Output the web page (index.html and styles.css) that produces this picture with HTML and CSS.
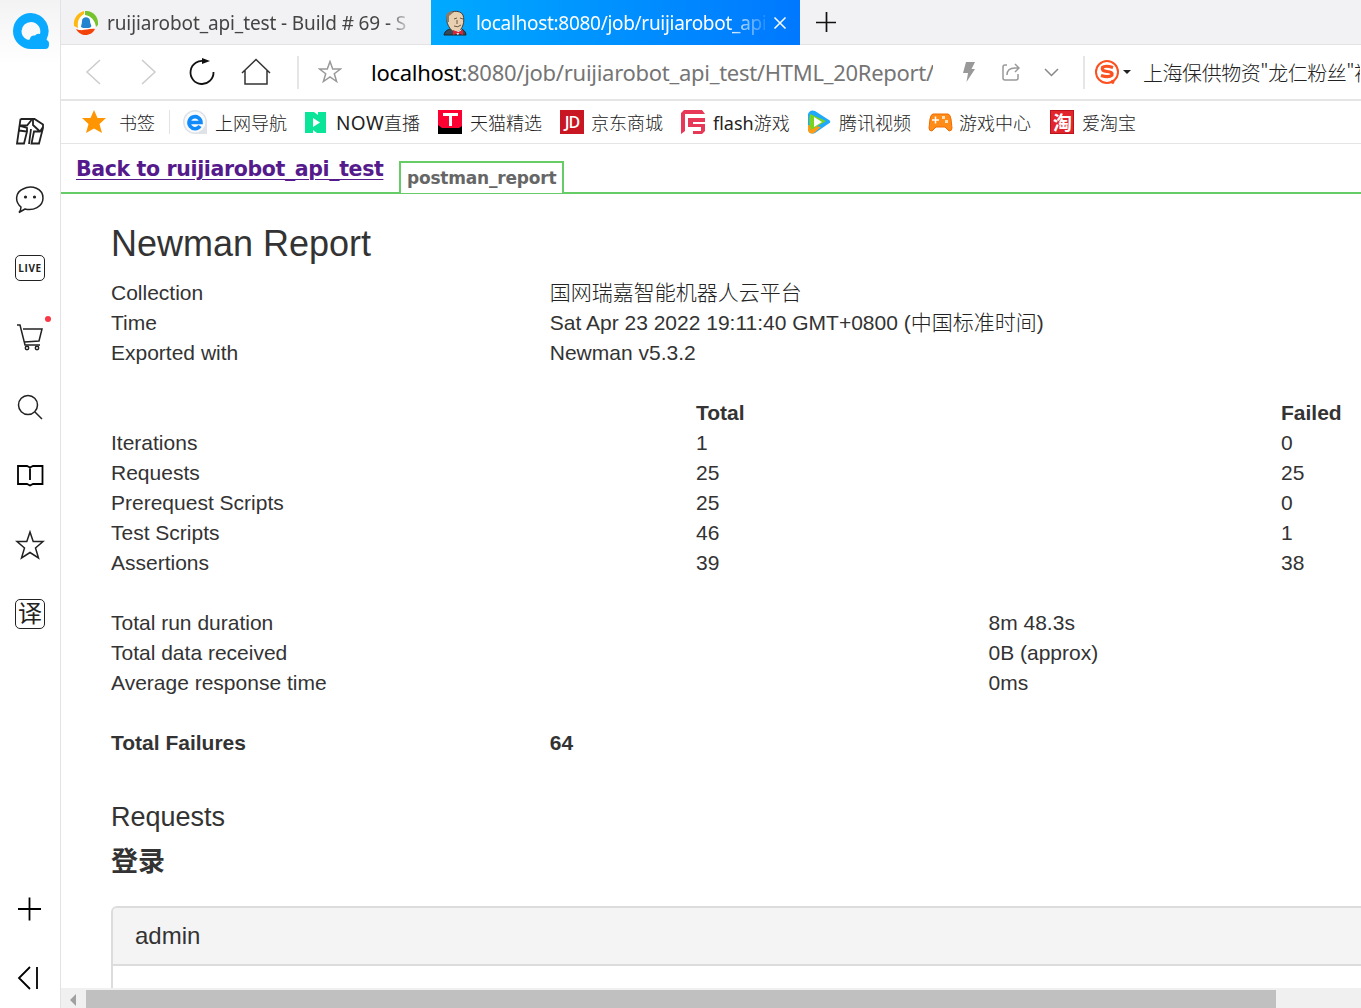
FILE: index.html
```
<!DOCTYPE html>
<html lang="zh-CN">
<head>
<meta charset="utf-8">
<title>HTML Report</title>
<link rel="stylesheet" href="styles.css">
</head>
<body>

<div class="browser">
  <aside class="sidebar">
    <div class="logo">
      <svg width="36" height="36" viewBox="0 0 36 36"><path fill="#09aaff" d="M18 0A18 18 0 0 0 18 36H32Q36 36 36 31.500Q36 28 33.500 26.500A18 18 0 0 0 18 0Z"/><path fill="#f9f9fa" d="M18 9A9.500 9.500 0 0 0 8.500 18Q8.500 24 14 26.500Q17 27.500 17 25.500Q18 22 22 22.500Q24 20 27 21A9.500 9.500 0 0 0 18 9Z"/></svg>
    </div>
    <div class="side-items">
      <div class="side-item"><svg width="30" height="30" viewBox="0 0 30 30"><path class="map" d="M5.500 3H19.500L28 8.500V12L24 27.500H16.500L19 15.500H25L28 11M5.500 3L2 27.500H9L12 15.500L4 14.500M4.500 9.500H12L16.500 4M12 15.500V12L5 10M18 3V9L25 15.500M14 28L16 13"/></svg></div>
      <div class="side-item"><svg width="30" height="30" viewBox="0 0 30 30"><path d="M6 22C-1 16 1 7 8 4C17-1 28 4 28 13C28 22 18 26 10 24C8 25 6 26.500 4 27.500Q6 25 6 22Z"/><circle class="solid" cx="10.500" cy="12" r="1.600"/><circle class="solid" cx="19.500" cy="12" r="1.600"/></svg></div>
      <div class="side-item"><span class="live">LIVE</span></div>
      <div class="side-item cart"><svg width="30" height="30" viewBox="0 0 30 30"><path d="M2 2H5L10 22H25M8 6H27L24 18L9.500 19"/><circle cx="12" cy="25" r="1.700"/><circle cx="22" cy="25" r="1.700"/></svg></div>
      <div class="side-item"><svg width="30" height="30" viewBox="0 0 30 30"><circle cx="13" cy="13" r="9.500"/><path d="M20 20L27 27"/></svg></div>
      <div class="side-item"><svg width="30" height="30" viewBox="0 0 30 30"><path class="thick" d="M3 5H12L15 6.500L18 5H27.500V23H18L15 24.500L12 23H3ZM15 6V19"/></svg></div>
      <div class="side-item"><svg width="30" height="30" viewBox="0 0 30 30"><path d="M15 2L18.200 11.500H28L20.500 18L23.500 28L15 22.500L6.500 28L9.500 18L2 11.500H11.800Z"/></svg></div>
      <div class="side-item"><span class="translate">译</span></div>
    </div>
    <div class="side-bottom">
      <div class="side-item"><svg width="30" height="30" viewBox="0 0 30 30"><path class="thick" d="M3 15H26M14.500 3.500V26.500"/></svg></div>
      <div class="side-item"><svg width="30" height="30" viewBox="0 0 30 30"><path class="thick" d="M15 4L4 15L15 26M22 4V26"/></svg></div>
    </div>
  </aside>

  <main class="main">
    <div class="tabs">
      <div class="tab">
        <svg width="26" height="26" viewBox="0 0 26 26"><circle cx="13" cy="13" r="10" fill="#fff"/><path fill="#fdb813" d="M11 1C4 3 0 9 1 16L5 18C4 11 6 7 11 4Z"/><path fill="#76c32d" d="M12 1C20 0 26 7 25 15L23 17C22 10 18 6 12 5Z"/><path fill="#f4420b" d="M3 19C10 22 15 18 22 19C19 26 8 28 3 19Z"/><path fill="#2584cf" d="M8 17C8 15 9 14 9 11C9 6 17 6 17 11C17 14 19 15 18 17L16 18H10Z"/></svg>
        <span class="tab-title tab-first">ruijiarobot_api_test - Build # 69 - S</span>
      </div>
      <div class="tab active">
        <svg width="24" height="26" viewBox="0 0 24 26"><path fill="#344a59" stroke="#222" d="M1 25C2 20 6 19 9 19L17 18C21 20 23 22 23 25Z"/><path fill="#e9d0b0" stroke="#453c35" d="M4 6C5 1 17-1 20 5C22 11 20 20 14 22C8 22 5 16 4 12Z"/><path fill="#8b7b69" d="M3 5C5 1 9 1 11 2L6 6L6 12L4 12Z"/><path stroke="#6b5745" fill="none" d="M11 9L14 8M17 8L20 9M14 10V14M11 16Q15 18 18 15"/><path fill="#f5f5f5" d="M8 19L15 25L19 19L13 22Z"/><path fill="#dc2638" d="M10 20L15 22L20 20V25L15 23L10 25Z"/></svg>
        <span class="tab-title">localhost:8080/job/ruijiarobot_api</span>
        <svg class="close" width="14" height="14" viewBox="0 0 14 14"><path d="M1.500 1.500L12.500 12.500M12.500 1.500L1.500 12.500"/></svg>
      </div>
      <svg class="new-tab" width="20" height="20" viewBox="0 0 20 20"><path d="M0 10.500H20M10.500 0V20"/></svg>
    </div>

    <div class="toolbar">
      <div class="tool muted"><svg width="30" height="30" viewBox="0 0 30 30"><path d="M21 3L8 15L21 27"/></svg></div>
      <div class="tool muted"><svg width="30" height="30" viewBox="0 0 30 30"><path d="M9 3L22 15L9 27"/></svg></div>
      <div class="tool"><svg width="30" height="30" viewBox="0 0 30 30"><path class="reload" d="M18 4.400A11.500 11.500 0 1 0 26.500 15"/><path fill="#111" stroke="none" d="M15 1L23 4L15 7Z"/></svg></div>
      <div class="tool"><svg width="30" height="30" viewBox="0 0 30 30"><path d="M1 16L15 2.500L29 16M4 13V27H26V13"/></svg></div>
      <span class="divider"></span>
      <svg class="fav" width="24" height="24" viewBox="0 0 24 24"><path d="M12 1.500L14.700 9H22.500L16.300 13.700L18.600 21.500L12 17L5.400 21.500L7.700 13.700L1.500 9H9.300Z"/></svg>
      <div class="url"><b>localhost</b>:8080/job/ruijiarobot_api_test/HTML_20Report/</div>
      <svg class="bolt" width="14" height="20" viewBox="0 0 14 20"><path d="M4 0H13L9.500 7H13L4.500 20L6 11H1Z"/></svg>
      <svg class="share" width="18" height="18" viewBox="0 0 18 18"><path d="M5 2H3Q1 2 1 4V15Q1 17 3 17H14Q16 17 16 15V11M5 12Q5 5 13 5H17M13 1L17 5L13 9"/></svg>
      <svg class="chevron" width="15" height="9" viewBox="0 0 15 9"><path d="M1 1L7.500 7.500L14 1"/></svg>
      <span class="divider search-divider"></span>
      <svg class="sogou" width="26" height="26" viewBox="0 0 26 26"><circle cx="13" cy="13" r="11"/><path d="M19 8.500Q11 6 8.500 8.500Q7 12 13 12.500Q19 13 18 16Q15 19 7 16.500"/><path d="M17 22L20 24"/></svg>
      <span class="caret"></span>
      <span class="search-text">上海保供物资"龙仁粉丝"被</span>
    </div>

    <div class="bookmarks">
      <a class="bookmark first"><svg width="24" height="24" viewBox="0 0 24 24"><path fill="#ff9500" d="M12 0L15.500 8H24L17.500 14L20 23L12 18.500L4 23L6.500 14L0 8H8.500Z"/></svg>书签</a>
      <a class="bookmark"><svg width="24" height="24" viewBox="0 0 24 24"><path fill="#dfe3e7" d="M12 0A12 12 0 1 0 12 24H24V12A12 12 0 0 0 12 0Z"/><circle cx="12" cy="12" r="10.500" fill="#f8fafc"/><path fill="none" stroke="#118bfa" stroke-width="3.600" d="M6 12.500H18A6 6 0 1 0 17 16"/></svg>上网导航</a>
      <a class="bookmark now"><svg width="21" height="21" viewBox="0 0 21 21"><path fill="#0be59a" d="M0 0H9L13 3V0H21V21H12L8 18V21H0Z"/><path fill="#fff" d="M8 6L15 10.500L8 15Z"/></svg><span><span class="now-name">NOW</span>直播</span></a>
      <a class="bookmark tmall"><svg width="24" height="24" viewBox="0 0 24 24"><path fill="#000" d="M0 0H24V24H0Z"/><path fill="#ff0032" d="M0 0H24V16L21 18H4L0 15Z"/><path fill="#fff" d="M5 3H20V6H14V16H11V6H5Z"/></svg>天猫精选</a>
      <a class="bookmark jd"><span class="jd-logo">JD</span>京东商城</a>
      <a class="bookmark flash"><svg width="24" height="24" viewBox="0 0 24 24"><path fill="#e73957" d="M3 0H21L24 4H4V21L0 24V3ZM7 8H24V12H12V14H24V21L21 24H12V21H20V17H7Z"/></svg><span><span class="flash-name">flash</span>游戏</span></a>
      <a class="bookmark video"><svg width="24" height="24" viewBox="0 0 24 24"><path fill="#20a9fa" d="M1 4Q3-1 8 1L22 10Q25 12 21 14L8 23Q3 25 1 20Z"/><path fill="#ff9b14" d="M1 15L14 17L7 23Q2 25 1 20Z"/><path fill="#79d321" d="M3 4L19 11L4 20Q1 12 3 4Z"/><path fill="#fff" d="M7 7L15 12L7 17Z"/></svg>腾讯视频</a>
      <a class="bookmark games"><svg width="25" height="19" viewBox="0 0 25 19"><path fill="#ff8b18" stroke="#ef6c00" d="M5 1H20Q22 1 23 6L24 15Q24 18 21 18L17 14H8L4 18Q1 18 1 15L2 6Q3 1 5 1Z"/><path stroke="#fff" stroke-width="1.500" d="M4 7H11M7.500 3.500V10.500"/><path fill="#ffe1bd" d="M14 3H17V6H14ZM17 7H20V10H17Z"/></svg>游戏中心</a>
      <a class="bookmark"><span class="tao-logo">淘</span>爱淘宝</a>
    </div>

    <div class="page">
      <div class="report-tabs">
        <a class="back" href="#">Back to ruijiarobot_api_test</a>
        <span class="report-tab">postman_report</span>
      </div>
      <div class="report">
        <h1>Newman Report</h1>
        <div class="row quarters">
          <span>Collection</span><span class="collection">国网瑞嘉智能机器人云平台</span>
          <span>Time</span><span>Sat Apr 23 2022 19:11:40 GMT+0800 (<span class="collection">中国标准时间</span>)</span>
          <span>Exported with</span><span>Newman v5.3.2</span>
        </div>
        <div class="row thirds">
          <span></span><strong>Total</strong><strong>Failed</strong>
          <span>Iterations</span><span>1</span><span>0</span>
          <span>Requests</span><span>25</span><span>25</span>
          <span>Prerequest Scripts</span><span>25</span><span>0</span>
          <span>Test Scripts</span><span>46</span><span>1</span>
          <span>Assertions</span><span>39</span><span>38</span>
        </div>
        <div class="row halves">
          <span>Total run duration</span><span>8m 48.3s</span>
          <span>Total data received</span><span>0B (approx)</span>
          <span>Average response time</span><span>0ms</span>
        </div>
        <div class="row quarters">
          <strong>Total Failures</strong><strong>64</strong>
        </div>
        <h2>Requests</h2>
        <h3>登录</h3>
        <div class="panel">
          <div class="panel-heading">admin</div>
          <div class="panel-body"></div>
        </div>
      </div>
    </div>
    <div class="scrollbar">
      <span class="scroll-arrow"></span>
      <span class="scroll-thumb"></span>
    </div>
  </main>
</div>

</body>
</html>
```
FILE: styles.css
```
* {
  box-sizing: border-box;
}

body {
  margin: 0;
  overflow: hidden;
  background: #fff;
  color: #333;
  font-family: "Liberation Sans", "Noto Sans CJK SC", sans-serif;
}

svg {
  display: block;
  flex-shrink: 0;
  fill: none;
}

.browser {
  display: flex;
  height: 1008px;
}

/* left rail */
.sidebar {
  width: 61px;
  flex-shrink: 0;
  display: flex;
  flex-direction: column;
  border-right: 1px solid #e2e2e2;
  background: linear-gradient(#f3f3f4, #fff 65px);
}

.logo {
  height: 96px;
  padding: 13px 0 0 13px;
}

.side-item {
  height: 69px;
  width: 60px;
  display: flex;
  align-items: center;
  justify-content: center;
}

.side-item svg {
  stroke: #222;
  stroke-width: 1.5;
}

.side-item .map {
  stroke-width: 1.8;
}

.side-item .thick {
  stroke: #000;
  stroke-width: 1.8;
}

.side-item .solid {
  fill: #222;
  stroke: none;
}

.live,
.translate {
  display: flex;
  align-items: center;
  justify-content: center;
  width: 30px;
  border: 1.5px solid #222;
  border-radius: 5px;
  color: #222;
}

.live {
  height: 26px;
  margin-bottom: 1px;
  font: bold 10px "Open Sans", sans-serif;
  letter-spacing: .6px;
}

.translate {
  height: 30px;
  font-size: 24px;
  line-height: 26px;
}

.cart {
  position: relative;
}

.cart::after {
  content: "";
  position: absolute;
  left: 45px;
  top: 13px;
  width: 6px;
  height: 6px;
  border-radius: 50%;
  background: #fa3747;
}

.side-bottom {
  margin-top: auto;
  margin-bottom: -4px;
}

.main {
  width: 1300px;
  display: flex;
  flex-direction: column;
}

/* browser tabs */
.tabs {
  height: 45px;
  display: flex;
  align-items: center;
  background: #f2f2f4;
  box-shadow: inset 0 -1px #e3e3e3;
}

.tab {
  width: 370px;
  height: 45px;
  display: flex;
  align-items: center;
  padding-left: 12px;
  color: #444;
  font: 19px "Noto Sans", sans-serif;
}

.tab.active {
  width: 369px;
  color: #fff;
  background: linear-gradient(90deg, #00aaff, #0078ff);
}

.tab-title {
  width: 302px;
  margin-left: 8px;
  overflow: hidden;
  white-space: nowrap;
  mask-image: linear-gradient(90deg, #000 280px, transparent 306px);
}

.tab-first {
  letter-spacing: -.12px;
}

.active .tab-title {
  width: 289px;
  margin-left: 9px;
  letter-spacing: -.3px;
  mask-image: linear-gradient(90deg, #000 250px, transparent 296px);
}

.close {
  margin-left: 8px;
  stroke: #fff;
  stroke-width: 1.5;
}

.new-tab {
  margin: 0 0 2px 16px;
  stroke: #111;
  stroke-width: 1.7;
}

/* address bar */
.toolbar {
  height: 56px;
  display: flex;
  align-items: center;
  padding-left: 6px;
  border-bottom: 2px solid #e5e5e5;
}

.tool {
  width: 54px;
  display: flex;
  justify-content: center;
}

.tool svg {
  stroke: #333;
  stroke-width: 1.5;
}

.muted svg {
  stroke: #ccc;
}

.tool .reload {
  stroke: #111;
  stroke-width: 1.8;
}

.divider {
  width: 2px;
  height: 33px;
  margin-left: 14px;
  flex-shrink: 0;
  background: #e6e6e6;
}

.fav {
  margin-left: 19px;
  stroke: #999;
  stroke-width: 1.5;
}

.url {
  width: 562px;
  margin-left: 29px;
  overflow: hidden;
  white-space: nowrap;
  color: #757575;
  font: 22px "Noto Sans", sans-serif;
  letter-spacing: -.28px;
}

.url b {
  color: #000;
  font-weight: normal;
}

.bolt {
  margin-left: 29px;
  fill: #999;
}

.share {
  margin-left: 26px;
  stroke: #999;
  stroke-width: 1.5;
}

.chevron {
  margin-left: 24px;
  stroke: #888;
  stroke-width: 1.5;
}

.search-divider {
  margin-left: 24px;
}

.sogou {
  margin-left: 9px;
  stroke: #fb5020;
  stroke-width: 2;
}

.sogou path {
  stroke-width: 3.2;
}

.caret {
  margin-left: 3px;
  border: 4px solid transparent;
  border-top: 4px solid #222;
  border-bottom: 0;
}

.search-text {
  margin-left: 12px;
  width: 217px;
  overflow: hidden;
  white-space: nowrap;
  font: 300 20px "Noto Sans CJK SC", sans-serif;
  letter-spacing: -.45px;
  color: #222;
}

/* bookmarks */
.bookmarks {
  height: 43px;
  flex-shrink: 0;
  display: flex;
  align-items: center;
  border-bottom: 1px solid #e5e5e5;
  color: #222;
  font: 300 18px "Noto Sans CJK SC", sans-serif;
  white-space: nowrap;
}

.bookmark {
  display: flex;
  align-items: center;
  gap: 8px;
  height: 24px;
  margin-right: 18px;
}

.bookmark.first {
  width: 109px;
  gap: 13px;
  padding-left: 21px;
  margin-right: 13px;
  border-right: 1px solid #e3e3e3;
}

.now {
  width: 115px;
  gap: 10px;
}

.now-name {
  font: 19px "Noto Sans", sans-serif;
  letter-spacing: .4px;
}

.tmall {
  width: 104px;
}

.jd {
  width: 103px;
  gap: 7px;
}

.flash {
  width: 108px;
}

.flash-name {
  font: 18px "Noto Sans", sans-serif;
}

.video {
  width: 103px;
}

.games {
  width: 104px;
  gap: 6px;
}

.jd-logo,
.tao-logo {
  width: 24px;
  height: 24px;
  display: flex;
  align-items: center;
  justify-content: center;
  background: #c91623;
  color: #fff;
  font: 600 16px/24px "Open Sans", sans-serif;
  letter-spacing: -1px;
}

.tao-logo {
  background: #e2242c;
  border: 1px solid #b9141c;
  font: bold 19px/22px "Noto Sans CJK SC", sans-serif;
}

/* report page */
.page {
  flex: 1;
  overflow: hidden;
}

.report-tabs {
  height: 50px;
  display: flex;
  align-items: flex-end;
  padding-left: 15px;
  border-bottom: 2px solid #66cc66;
  font-family: "DejaVu Sans", sans-serif;
  font-weight: bold;
}

.back {
  width: 309px;
  margin-right: 14px;
  padding-bottom: 10px;
  color: #551a8b;
  font-size: 20.5px;
  line-height: 26px;
  letter-spacing: -.36px;
  white-space: nowrap;
  text-decoration-thickness: 1px;
  text-underline-offset: 3px;
}

.report-tab {
  width: 165px;
  height: 32px;
  margin-bottom: -1px;
  padding-left: 6px;
  border: 2px solid #66cc66;
  border-bottom: 0;
  background: #fff;
  color: #666;
  font-size: 17px;
  line-height: 30px;
  letter-spacing: -.2px;
}

.report {
  width: 1805px;
  padding: 30px 0 0 50px;
  font-size: 21px;
  line-height: 30px;
}

.collection {
  font-weight: 300;
  color: #222;
}

h1 {
  margin: 0 0 14px;
  font-size: 36px;
  font-weight: normal;
  line-height: 40px;
}

.row {
  display: grid;
  grid-auto-rows: 30px;
  width: 1755px;
  margin-bottom: 30px;
}

.quarters {
  grid-template-columns: 1fr 3fr;
}

.thirds {
  grid-template-columns: repeat(3, 1fr);
}

.halves {
  grid-template-columns: 1fr 1fr;
}

h2 {
  margin: 44px 0 15px;
  font-size: 27px;
  font-weight: normal;
  line-height: 30px;
}

h3 {
  margin: 0 0 29px;
  font-size: 27px;
  line-height: 30px;
}

.panel {
  border: 2px solid #dcdcdc;
  border-radius: 6px;
  overflow: hidden;
}

.panel-heading {
  height: 58px;
  padding-left: 22px;
  border-bottom: 2px solid #dcdcdc;
  background: #f4f4f4;
  font-size: 24px;
  line-height: 56px;
}

.panel-body {
  height: 150px;
}

.scrollbar {
  height: 20px;
  flex-shrink: 0;
  display: flex;
  align-items: center;
  padding: 2px 0 0 9px;
  background: #f0f0f0;
}

.scroll-arrow {
  margin-top: 2px;
  border: 6px solid transparent;
  border-right: 6px solid #a0a0a0;
  border-left: 0;
}

.scroll-thumb {
  width: 1190px;
  height: 18px;
  margin-left: 10px;
  background: #c0c0c0;
}
```
